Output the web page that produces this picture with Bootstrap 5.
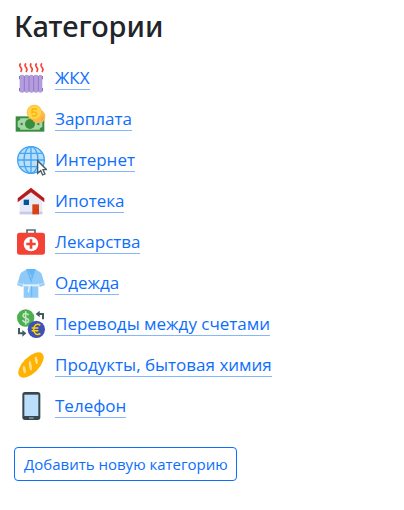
<!DOCTYPE html>
<html lang="ru">
<head>
<meta charset="utf-8">
<meta name="viewport" content="width=device-width, initial-scale=1">
<title>Категории</title>
<link href="https://cdn.jsdelivr.net/npm/bootstrap@5.3.0/dist/css/bootstrap.min.css" rel="stylesheet">
<style>
body { font-family: "Open Sans", "Noto Sans", sans-serif; }
.page { padding: 6px 14px; }
.page-title { font-size: 29px; line-height: 40px; margin-bottom: 11px; font-family: "Noto Sans", sans-serif; }
.category-list { padding-left: 1px; margin-bottom: 21px; }
.category { height: 41px; gap: 8px; }
.category svg { width: 32px; height: 32px; flex: none; }
.category-link { font-size: 17px; line-height: 23px; text-decoration: none; border-bottom: 1px solid #86b7fe; }
.btn-add { font-size: 15px; line-height: 22px; padding: 5px 8px 5px 9px; border-radius: 4px; }
</style>
</head>
<body>
<main class="page">
  <h1 class="page-title fw-medium">Категории</h1>
  <ul class="category-list list-unstyled">
    <li class="category d-flex align-items-center">
      <svg viewBox="0 0 48 48" aria-hidden="true">
        <path d="M8.500 2q-3 3 0 6t0 7M16.500 2q-3 3 0 6t0 7M24.500 2q-3 3 0 6t0 7M32.500 2q-3 3 0 6t0 7M40.500 2q-3 3 0 6t0 7" fill="none" stroke="#f44336" stroke-width="2.300"/>
        <path d="M6 21h36v5H6zM6 39h36v5H6z" fill="#7e57c2"/>
        <g fill="#b39ddb"><rect x="7" y="19" width="7" height="27" rx="3"/><rect x="14" y="19" width="7" height="27" rx="3"/><rect x="21" y="19" width="7" height="27" rx="3"/><rect x="28" y="19" width="7" height="27" rx="3"/><rect x="35" y="19" width="6" height="27" rx="3"/><path d="M8 21h32v22H8z"/></g>
        <path d="M14 21v23M21 21v23M28 21v23M35 21v23" stroke="#9575cd" stroke-width="1.500"/>
      </svg>
      <a class="category-link" href="#">ЖКХ</a>
    </li>
    <li class="category d-flex align-items-center">
      <svg viewBox="0 0 48 48" aria-hidden="true">
        <path fill="#388e3c" d="M1 20h43v23H1z"/>
        <path fill="#a5d6a7" d="M8 23h29c0 2 1 3 4 4v9c-3 1-4 2-4 4H8c0-2-1-3-4-4v-9c3-1 4-2 4-4z"/>
        <circle cx="22.500" cy="31.500" r="7.500" fill="#388e3c"/><circle cx="10" cy="31.500" r="1.800" fill="#388e3c"/><circle cx="35" cy="31.500" r="1.800" fill="#388e3c"/>
        <circle cx="35" cy="20" r="10.500" fill="#ffb74d"/><path d="M39 26l4-5" stroke="#ffa040" stroke-width="2"/>
        <circle cx="29" cy="14" r="11.500" fill="#ffc030"/><circle cx="29" cy="14" r="10" fill="#ffd54f"/>
        <path d="M33 9h-7l-.5 5c3-1 7-.5 7 2.500s-4 4-7 2" fill="none" stroke="#ffb300" stroke-width="2.200"/>
      </svg>
      <a class="category-link" href="#">Зарплата</a>
    </li>
    <li class="category d-flex align-items-center">
      <svg viewBox="0 0 48 48" aria-hidden="true">
        <circle cx="24" cy="24" r="20.500" fill="#bbdefb"/>
        <g fill="none" stroke="#42a5f5" stroke-width="2"><circle cx="24" cy="24" r="20"/><ellipse cx="24" cy="24" rx="10.500" ry="20"/><path d="M24 4v40M4 24h40M7 14h34M7 34h34"/></g>
        <path d="M34 25v19l4.500-4 3 6.500 3.500-1.500-3-6.500h5.500z" fill="#fff" stroke="#455a64" stroke-width="2"/>
      </svg>
      <a class="category-link" href="#">Интернет</a>
    </li>
    <li class="category d-flex align-items-center">
      <svg viewBox="0 0 48 48" aria-hidden="true">
        <path fill="#e8eaf6" d="M24 8L7 22v22h34V22z"/><path fill="#c5cae9" d="M7 40h34v4H7z"/>
        <path fill="#b71c1c" d="M24 4L4 20v6l20-15 20 15v-6z"/>
        <path fill="#01579b" d="M13 22h8v8h-8z"/><path fill="#d84315" d="M26 29h10v15H26z"/><path fill="#bf360c" d="M33 36h2v2h-2z"/>
      </svg>
      <a class="category-link" href="#">Ипотека</a>
    </li>
    <li class="category d-flex align-items-center">
      <svg viewBox="0 0 48 48" aria-hidden="true">
        <path d="M18 12V6h12v6" fill="none" stroke="#546e7a" stroke-width="2.500"/>
        <path fill="#f44336" d="M7 10h34q4 0 4 4v25q0 4-4 4H7q-4 0-4-4V14q0-4 4-4z"/>
        <circle cx="24" cy="27" r="11" fill="#fff"/><path fill="#f44336" d="M22 20h4v5h5v4h-5v5h-4v-5h-5v-4h5z"/>
      </svg>
      <a class="category-link" href="#">Лекарства</a>
    </li>
    <li class="category d-flex align-items-center">
      <svg viewBox="0 0 48 48" aria-hidden="true">
        <path fill="#90caf9" d="M18 3h12l8 5c3 2 3 8 7 19l-8 3-2-7v23H13V23l-2 7-8-3C7 16 7 10 10 8z"/>
        <path fill="#64b5f6" d="M19 3h10l-4 11z"/>
        <path d="M18 3l7 20M30 3l-5 15" fill="none" stroke="#64b5f6" stroke-width="2"/>
        <path fill="#e3f2fd" d="M13 26h22v3H13z"/><path d="M25 29v16" stroke="#64b5f6" stroke-width="1.500"/><path d="M22 27l-2 11" stroke="#e3f2fd" stroke-width="2"/>
        <path d="M4 24l8 3M36 27l8-3" stroke="#bbdefb" stroke-width="2"/>
      </svg>
      <a class="category-link" href="#">Одежда</a>
    </li>
    <li class="category d-flex align-items-center">
      <svg viewBox="0 0 48 48" aria-hidden="true">
        <path d="M42 17V9h-8M6 30v8h8" fill="none" stroke="#455a64" stroke-width="3"/><path fill="#455a64" d="M37 4v10l-6-5zM11 33v10l6-5z"/>
        <circle cx="16" cy="15" r="13" fill="#4caf50"/><circle cx="32" cy="32" r="13" fill="#3f51b5"/>
        <path d="M20.500 11c-1-3-8-4-8.500 0-.5 5 9 3 8.500 8-.5 4-8 3-9-1M16 5v20" fill="none" stroke="#c8e6c9" stroke-width="2.300"/>
        <path d="M38 26c-5-4-10 0-10 6s5 10 10 6M25 30h10M25 34h10" fill="none" stroke="#ffd600" stroke-width="2.300"/>
      </svg>
      <a class="category-link" href="#">Переводы между счетами</a>
    </li>
    <li class="category d-flex align-items-center">
      <svg viewBox="0 0 48 48" aria-hidden="true">
        <ellipse cx="24" cy="24" rx="24" ry="12" transform="rotate(-45 24 24)" fill="#ffb300"/>
        <g fill="#ffe082" stroke="#ffa000"><ellipse cx="14" cy="31" rx="2.800" ry="6.500" transform="rotate(-8 14 31)"/><ellipse cx="23" cy="25" rx="2.800" ry="8" transform="rotate(-8 23 25)"/><ellipse cx="32" cy="17" rx="2.800" ry="6.500" transform="rotate(-8 32 17)"/></g>
      </svg>
      <a class="category-link" href="#">Продукты, бытовая химия</a>
    </li>
    <li class="category d-flex align-items-center">
      <svg viewBox="0 0 48 48" aria-hidden="true">
        <rect x="11" y="3" width="27" height="42" rx="4" fill="#37474f"/><path fill="#bbdefb" d="M14 7h21v32H14z"/><path fill="#90a4ae" d="M21 41h7v2h-7z"/>
      </svg>
      <a class="category-link" href="#">Телефон</a>
    </li>
  </ul>
  <button type="button" class="btn btn-outline-primary btn-add">Добавить новую категорию</button>
</main>
<script src="https://cdn.jsdelivr.net/npm/bootstrap@5.3.0/dist/js/bootstrap.bundle.min.js"></script>
</body>
</html>
